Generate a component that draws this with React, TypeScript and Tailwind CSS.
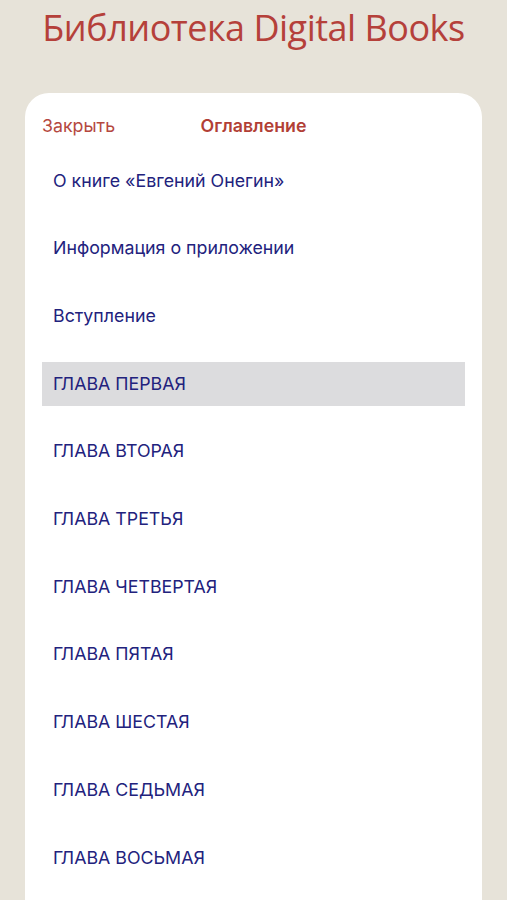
const chapters = [
  "О книге «Евгений Онегин»",
  "Информация о приложении",
  "Вступление",
  "ГЛАВА ПЕРВАЯ",
  "ГЛАВА ВТОРАЯ",
  "ГЛАВА ТРЕТЬЯ",
  "ГЛАВА ЧЕТВЕРТАЯ",
  "ГЛАВА ПЯТАЯ",
  "ГЛАВА ШЕСТАЯ",
  "ГЛАВА СЕДЬМАЯ",
  "ГЛАВА ВОСЬМАЯ",
];

export default function App() {
  const selected = 3;

  return (
    <div className="flex h-[900px] w-full flex-col overflow-hidden bg-[#e7e3d9] font-['Open_Sans',sans-serif]">
      <h1 className="pt-[2px] text-center text-[36px] leading-[52px] tracking-[-0.5px] text-[#b5403a]">
        Библиотека Digital Books
      </h1>

      <section className="mx-[25px] mt-[39px] flex-1 rounded-t-[24px] bg-white px-[17px] pt-[20px] font-['Inter',sans-serif]">
        <header className="grid h-[22px] grid-cols-[1fr_auto_1fr] items-center">
          <button type="button" className="justify-self-start text-[17.8px] text-[#b5483f]">
            Закрыть
          </button>
          <h2 className="text-[17.8px] font-semibold text-[#b23f36]">Оглавление</h2>
          <span />
        </header>

        <ul className="mt-[24px] flex flex-col gap-[23.7px]">
          {chapters.map((title, i) => (
            <li
              key={title}
              className={`flex h-[44px] items-center pl-[11px] text-[17.8px] text-[#22227d] ${
                i === selected ? "bg-[#dcdcde]" : ""
              }`}
            >
              {title}
            </li>
          ))}
        </ul>
      </section>
    </div>
  );
}
